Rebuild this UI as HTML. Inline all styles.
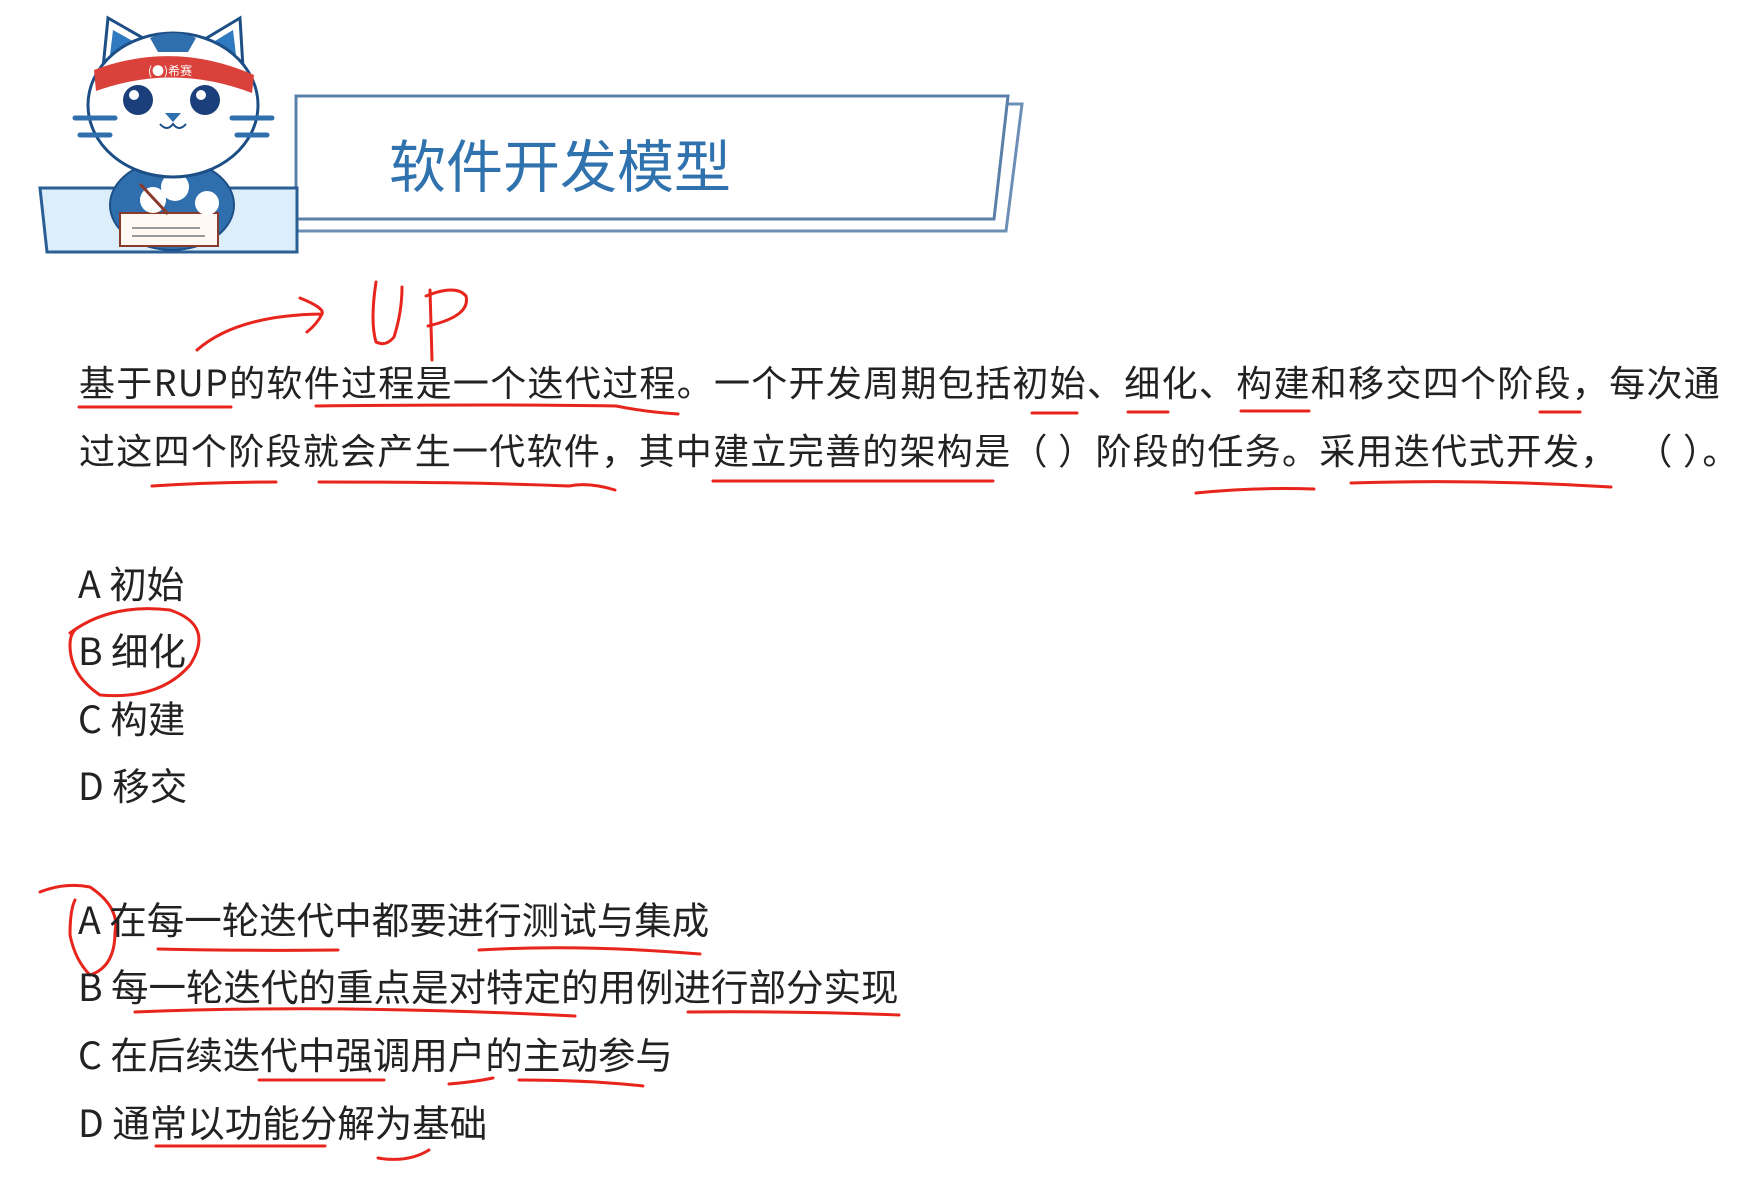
<!DOCTYPE html>
<html><head><meta charset="utf-8"><style>
body{margin:0;width:1760px;height:1177px;background:#fff;overflow:hidden;position:relative;font-family:"Liberation Sans","Noto Sans CJK SC",sans-serif;}
.t{position:absolute;color:#222;white-space:nowrap;font-family:"Noto Sans CJK SC","Liberation Sans",sans-serif;}
.p{font-size:36px;left:79px;letter-spacing:1.3px;}
.o{font-size:37.5px;left:78px;}
</style></head><body>
<svg width="1760" height="1177" style="position:absolute;left:0;top:0">
<polygon points="296,104 1022,104 1006,231 296,231" fill="#fff" stroke="#6d8fb5" stroke-width="3"/>
<polygon points="296,96 1008,96 994,219 296,219" fill="#fff" stroke="#5a7fa8" stroke-width="3"/>
<polygon points="40,188 297,188 297,252 47,252" fill="#dceefa" stroke="#2a5f95" stroke-width="3"/>
<ellipse cx="172" cy="205" rx="62" ry="45" fill="#2f6fae" stroke="#1d4f86" stroke-width="2"/>
<rect x="120" y="213" width="98" height="33" fill="#fff8f2" stroke="#8a3a2a" stroke-width="2"/>
<line x1="132" y1="228" x2="200" y2="228" stroke="#999" stroke-width="2"/>
<line x1="132" y1="236" x2="205" y2="236" stroke="#999" stroke-width="2"/>
<circle cx="153" cy="200" r="13" fill="#fff"/><circle cx="207" cy="203" r="12" fill="#fff"/>
<circle cx="175" cy="187" r="14" fill="#fff"/>
<polygon points="103,68 108,18 150,42" fill="#fff" stroke="#1d4f86" stroke-width="3"/>
<polygon points="243,68 240,18 200,42" fill="#fff" stroke="#1d4f86" stroke-width="3"/>
<polygon points="110,55 113,30 138,44" fill="#2f7ac0"/><polygon points="236,55 233,30 210,44" fill="#2f7ac0"/>
<ellipse cx="173" cy="105" rx="85" ry="72" fill="#fff" stroke="#1d4f86" stroke-width="3"/>
<path d="M150,38 q23,-10 46,0 l-8,14 h-30z" fill="#2f6fae"/>
<path d="M94,70 q80,-30 160,5 l-2,18 q-78,-30 -156,-2z" fill="#d9413a"/>
<text x="148" y="75" font-size="12" fill="#fff" font-family="Noto Sans CJK SC,sans-serif">(●)希赛</text>
<circle cx="138" cy="100" r="15" fill="#1b3f7a"/><circle cx="205" cy="100" r="15" fill="#1b3f7a"/>
<circle cx="134" cy="95" r="5" fill="#fff"/><circle cx="201" cy="95" r="5" fill="#fff"/>
<path d="M165,113 h16 l-8,9z" fill="#2f6fae"/>
<path d="M160,124 q7,8 13,0 q6,8 13,0" fill="none" stroke="#1d4f86" stroke-width="2"/>
<path d="M75,118 h40 M80,135 h30 M232,118 h40 M237,135 h30" stroke="#2f6fae" stroke-width="5" stroke-linecap="round"/>
<line x1="140" y1="184" x2="168" y2="214" stroke="#8a3a2a" stroke-width="3"/>
<g fill="none" stroke="#e8251c" stroke-width="3" stroke-linecap="round">
<path d="M197,350 q40,-35 125,-36 M300,298 q25,10 22,16 q-5,10 -15,18"/>
<path d="M376,282 q-6,40 0,60 q10,5 18,-5 q8,-25 8,-50 M430,290 l2,70 M426,296 q30,-12 40,0 q5,20 -38,30"/>
<path d="M79,407 h152 M316,406 q180,-2 300,0 q30,6 62,8 M1032,413 h45 M1128,412 h40 M1241,411 h68 M1540,412 h40"/>
<path d="M152,486 q60,-4 124,-4 M319,482 q160,0 250,4 q20,-4 46,4 M713,481 h280 M1196,493 q60,-6 118,-4 M1351,483 q130,-4 260,4"/>
<path d="M70,633 q40,-30 100,-23 q45,15 20,55 q-30,35 -90,30 q-30,-20 -30,-50 q0,-10 5,-15"/>
<path d="M40,892 q25,-10 50,-5 q30,20 25,45 q0,35 -25,43 q-15,-15 -20,-40 q0,-25 5,-35"/>
<path d="M158,949 q80,2 180,1 M479,950 q100,-6 221,4"/>
<path d="M135,1012 q200,-8 440,4 M688,1012 q110,-1 211,3"/>
<path d="M259,1080 h125 M449,1084 q25,-2 44,-6 M519,1080 q70,0 124,6"/>
<path d="M156,1146 h169 M378,1158 q30,5 51,-8"/>
</g>
</svg>
<div class="t" style="left:389px;top:122px;font-size:57px;color:#2f72ad;">软件开发模型</div>
<div class="t p" style="top:355px;">基于RUP的软件过程是一个迭代过程。一个开发周期包括初始、细化、构建和移交四个阶段，每次通</div>
<div class="t p" style="top:423px;">过这四个阶段就会产生一代软件，其中建立完善的架构是（ ）阶段的任务。采用迭代式开发，&nbsp; （ ）。</div>
<div class="t o" style="top:554px;">A 初始</div>
<div class="t o" style="top:621px;">B 细化</div>
<div class="t o" style="top:689px;">C 构建</div>
<div class="t o" style="top:756px;">D 移交</div>
<div class="t o" style="top:890px;">A 在每一轮迭代中都要进行测试与集成</div>
<div class="t o" style="top:957px;">B 每一轮迭代的重点是对特定的用例进行部分实现</div>
<div class="t o" style="top:1025px;">C 在后续迭代中强调用户的主动参与</div>
<div class="t o" style="top:1093px;">D 通常以功能分解为基础</div>
</body></html>
